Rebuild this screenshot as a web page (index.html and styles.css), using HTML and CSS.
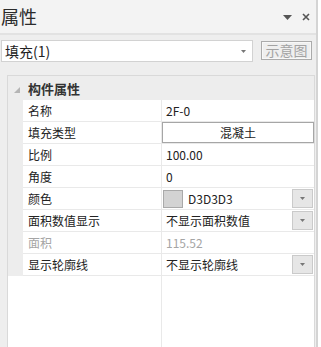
FILE: index.html
```html
<!DOCTYPE html>
<html lang="zh">
<head>
  <meta charset="UTF-8" />
  <title>属性</title>
  <link rel="stylesheet" href="styles.css">
</head>
<body>

<div class="panel">
  <!-- 标题栏 -->
  <div class="titlebar">
    <span class="title">属性</span>
    <div class="title-tools">
      <svg class="tool-pin" width="9" height="5" viewBox="0 0 9 5"><polygon points="0,0 9,0 4.5,5" fill="#555"/></svg>
      <svg class="tool-close" width="8" height="8" viewBox="0 0 8 8"><path d="M1 1L7 7M7 1L1 7" stroke="#555" stroke-width="1.6"/></svg>
    </div>
  </div>

  <!-- 选择行 -->
  <div class="toolbar">
    <div class="select">
      <span>填充(1)</span>
      <svg class="select-arrow" width="5" height="3" viewBox="0 0 5 3"><polygon points="0,0 5,0 2.5,3" fill="#777"/></svg>
    </div>
    <button class="preview-btn">示意图</button>
  </div>

  <!-- 属性表 -->
  <div class="grid">
    <div class="grid-head">
      <svg class="collapse" width="6" height="6" viewBox="0 0 6 6"><polygon points="6,0 6,6 0,6" fill="#b5b5b5"/></svg>
      <span>构件属性</span>
    </div>
    <div class="row">
      <div class="gutter"></div>
      <div class="name">名称</div>
      <div class="value">2F-0</div>
    </div>
    <div class="row">
      <div class="gutter"></div>
      <div class="name">填充类型</div>
      <div class="value no-pad"><div class="type-box">混凝土</div></div>
    </div>
    <div class="row">
      <div class="gutter"></div>
      <div class="name">比例</div>
      <div class="value">100.00</div>
    </div>
    <div class="row">
      <div class="gutter"></div>
      <div class="name">角度</div>
      <div class="value">0</div>
    </div>
    <div class="row">
      <div class="gutter"></div>
      <div class="name">颜色</div>
      <div class="value swatch-pad">
        <span class="swatch"></span>
        <span class="grow">D3D3D3</span>
        <span class="drop-btn"><svg width="5" height="3" viewBox="0 0 5 3"><polygon points="0,0 5,0 2.5,3" fill="#777"/></svg></span>
      </div>
    </div>
    <div class="row">
      <div class="gutter"></div>
      <div class="name">面积数值显示</div>
      <div class="value">
        <span class="grow">不显示面积数值</span>
        <span class="drop-btn"><svg width="5" height="3" viewBox="0 0 5 3"><polygon points="0,0 5,0 2.5,3" fill="#777"/></svg></span>
      </div>
    </div>
    <div class="row disabled">
      <div class="gutter"></div>
      <div class="name">面积</div>
      <div class="value">115.52</div>
    </div>
    <div class="row">
      <div class="gutter"></div>
      <div class="name">显示轮廓线</div>
      <div class="value">
        <span class="grow">不显示轮廓线</span>
        <span class="drop-btn"><svg width="5" height="3" viewBox="0 0 5 3"><polygon points="0,0 5,0 2.5,3" fill="#777"/></svg></span>
      </div>
    </div>
    <div class="grid-fill"></div>
  </div>
</div>

</body>
</html>
```

FILE: styles.css
```css
* {
  margin: 0; padding: 0; box-sizing: border-box;
}
body {
  font-family: "Noto Sans CJK SC", sans-serif;
  background: #ffffff;
  height: 100vh;
  display: flex;
  overflow: hidden;
  color: #222;
}
.panel {
  width: 318px;
  height: 100vh;
  background: #eeeeee;
  border-right: 2px solid #d4d4d4;
  display: flex;
  flex-direction: column;
}
.titlebar {
  height: 35px;
  background: #f3f3f3;
  border-bottom: 2px solid #e2e2e2;
  display: flex;
  align-items: center;
  justify-content: space-between;
  padding: 0 6px 0 1px;
}
.title {
  font-size: 18px;
  line-height: 20px;
  color: #2b2b2b;
  margin-top: -1px;
}
.title-tools {
  display: flex;
  align-items: center;
  gap: 10px;
}
.tool-pin {
  margin-top: 1px;
}
.select {
  width: 252px;
  height: 22px;
  margin-left: 1px;
  background: #fff;
  border: 1px solid #d2d2d2;
  display: flex;
  align-items: center;
  justify-content: space-between;
  padding: 0 6px 0 3px;
  font-size: 14px;
  color: #222;
}
.select-arrow {
  margin-top: 1px;
}
.toolbar {
  display: flex;
  align-items: flex-start;
  gap: 8px;
  margin-top: 5px;
}
.preview-btn {
  width: 51px;
  height: 19px;
  margin-top: 1px;
  background: #efefef;
  border: 1px solid #ababab;
  box-shadow: inset 0 0 0 1px #f8f8f8;
  font-family: "Noto Sans CJK SC", sans-serif;
  font-size: 14px;
  line-height: 15px;
  color: #a3a3a3;
}
.grid {
  flex: 1;
  margin: 13px 0 0 7px;
  width: 308px;
  border: 1px solid #d9d9d9;
  border-bottom: none;
  background: #fff;
  display: flex;
  flex-direction: column;
  font-size: 12px;
}
.grid-head {
  height: 24px;
  background: #ededed;
  display: flex;
  align-items: center;
  padding-left: 6px;
  font-size: 13px;
  font-weight: bold;
  color: #333;
}
.collapse {
  margin: 4px 8px 0 0;
}
.row {
  display: grid;
  grid-template-columns: 15px 139px 152px;
  height: 22px;
}
.gutter {
  background: #ededed;
}
.name, .value {
  border-bottom: 1px solid #e9e9e9;
  display: flex;
  align-items: center;
  line-height: 14px;
}
.name {
  border-right: 1px solid #e9e9e9;
  padding-left: 5px;
}
.value {
  padding-left: 4px;
}
.value.no-pad {
  padding: 0;
}
.value.swatch-pad {
  padding-left: 1px;
}
.type-box {
  width: 100%;
  height: 100%;
  border: 1px solid #a6a6a6;
  display: flex;
  align-items: center;
  justify-content: center;
}
.swatch {
  width: 20px;
  height: 18px;
  background: #d3d3d3;
  border: 1px solid #a9a9a9;
  margin-right: 5px;
}
.grow {
  flex: 1;
}
.drop-btn {
  width: 21px;
  height: 19px;
  margin-right: 1px;
  background: #e6e6e6;
  border: 1px solid #cacaca;
  display: flex;
  align-items: center;
  justify-content: center;
}
.row.disabled .name,
.row.disabled .value {
  color: #a5a5a5;
}
.grid-fill {
  flex: 1;
  margin-left: 153px;
  border-left: 1px solid #e9e9e9;
}
```
